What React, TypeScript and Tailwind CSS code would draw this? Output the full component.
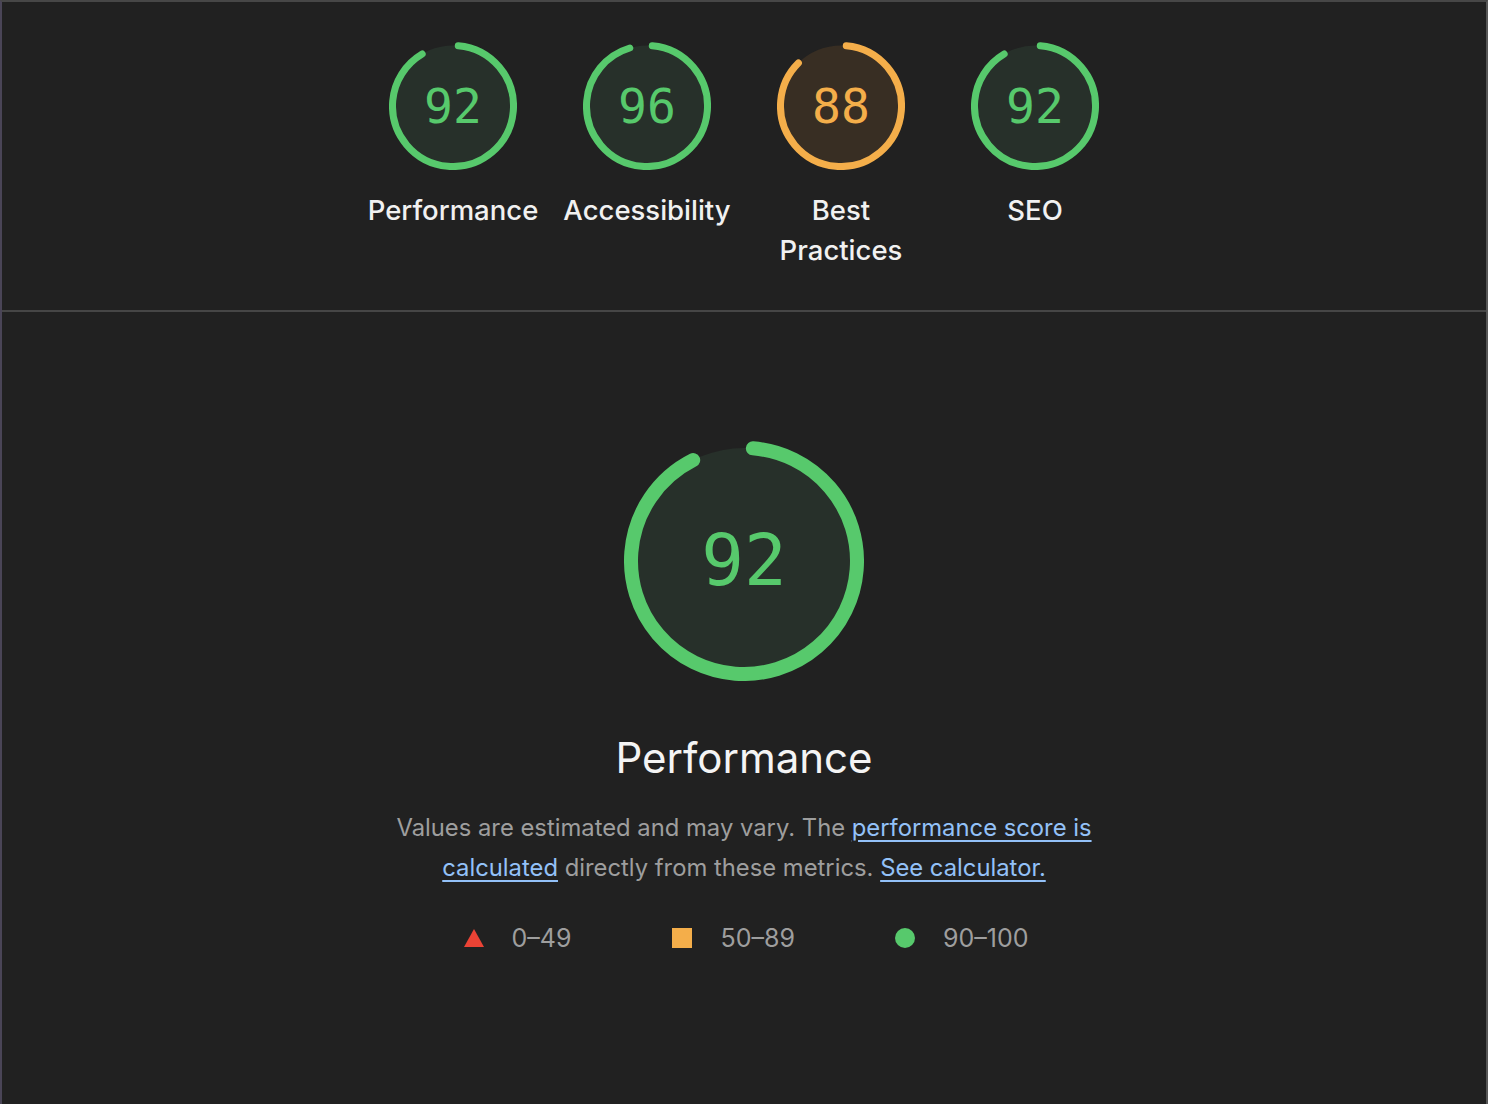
import React from "react";

type GaugeProps = {
  score: number;
  size: number;
  stroke: number;
  color: string;
  fill: string;
  fontSize: string;
  total: number;
  start: number;
};

function Gauge({ score, size, stroke, color, fill, fontSize, total, start }: GaugeProps) {
  const r = (size - stroke) / 2;
  const c = 2 * Math.PI * r;
  const len = (score / 100) * (total / 360) * c;
  return (
    <div className="relative" style={{ width: size, height: size }}>
      <svg width={size} height={size} viewBox={`0 0 ${size} ${size}`} className="absolute inset-0">
        <circle cx={size / 2} cy={size / 2} r={r} fill={fill} />
        <circle
          cx={size / 2}
          cy={size / 2}
          r={r}
          fill="none"
          stroke={color}
          strokeWidth={stroke}
          strokeLinecap="round"
          strokeDasharray={`${len} ${c}`}
          transform={`rotate(${-90 + start} ${size / 2} ${size / 2})`}
        />
      </svg>
      <div
        className={`absolute inset-0 flex items-center justify-center font-['DejaVu_Sans_Mono',monospace] ${fontSize}`}
        style={{ color }}
      >
        {score}
      </div>
    </div>
  );
}

const GREEN = "#57c96c";
const GREEN_BG = "#27302a";
const ORANGE = "#f4ae4a";
const ORANGE_BG = "#382e23";

const cats = [
  { score: 92, label: "Performance", color: GREEN, fill: GREEN_BG },
  { score: 96, label: "Accessibility", color: GREEN, fill: GREEN_BG },
  { score: 88, label: "Best Practices", color: ORANGE, fill: ORANGE_BG },
  { score: 92, label: "SEO", color: GREEN, fill: GREEN_BG },
];

export default function App() {
  return (
    <div className="w-full h-[1104px] bg-[#212121] border-t-2 border-t-[#474747] border-l-2 border-l-[#4a4557] border-r-2 border-r-[#575757] font-['Inter',sans-serif] overflow-hidden">
      <div className="h-[310px] border-b-2 border-b-[#464646] flex justify-center pt-[40px]">
        <div className="flex">
          {cats.map((c, i) => (
            <div key={i} className="w-[194px] flex flex-col items-center">
              <Gauge
                score={c.score}
                size={128}
                stroke={7}
                color={c.color}
                fill={c.fill}
                fontSize="text-[48px]"
                total={352}
                start={5}
              />
              <div className="mt-[20px] text-[27.5px] leading-[40px] text-[#f1f1f1] text-center font-medium w-[180px]">
                {c.label}
              </div>
            </div>
          ))}
        </div>
      </div>
      <div className="flex flex-col items-center pt-[129px]">
        <Gauge
          score={92}
          size={240}
          stroke={14}
          color={GREEN}
          fill={GREEN_BG}
          fontSize="text-[71px]"
          total={357}
          start={4.5}
        />
        <div className="mt-[53px] text-[42px] leading-[48px] text-[#f4f4f4]">Performance</div>
        <p className="mt-[26px] w-[720px] text-center text-[23.8px] leading-[40px] text-[#9e9e9e]">
          Values are estimated and may vary. The{" "}
          <a className="text-[#93c1f8] underline underline-offset-[4px] decoration-[2px]">performance score is calculated</a>{" "}
          directly from these metrics.{" "}
          <a className="text-[#93c1f8] underline underline-offset-[4px] decoration-[2px]">See calculator.</a>
        </p>
        <div className="mt-[30px] pl-[4px] flex items-center text-[25px] leading-[40px] text-[#9e9e9e]">
          <div className="flex items-center gap-[28px]">
            <svg width="20" height="20" viewBox="0 0 20 20">
              <polygon points="10,1 20,19 0,19" fill="#eb4335" />
            </svg>
            <span>0–49</span>
          </div>
          <div className="ml-[101px] flex items-center gap-[28px]">
            <div className="w-[20px] h-[20px] bg-[#f4ae4a]" />
            <span>50–89</span>
          </div>
          <div className="ml-[100px] flex items-center gap-[28px]">
            <div className="w-[20px] h-[20px] rounded-full bg-[#57c96c]" />
            <span>90–100</span>
          </div>
        </div>
      </div>
    </div>
  );
}
